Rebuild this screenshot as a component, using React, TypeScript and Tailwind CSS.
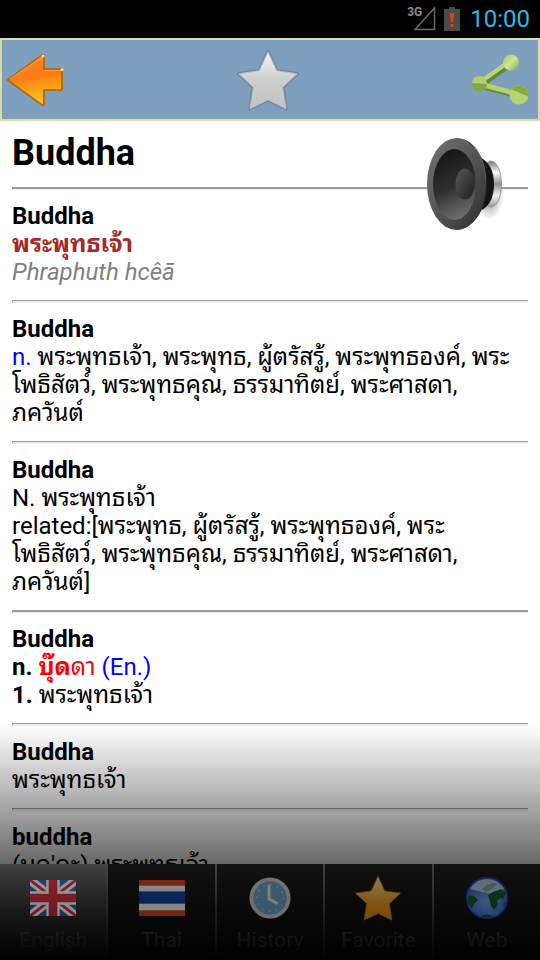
import React, { useState } from 'react';
import { clsx } from 'clsx';

type Entry = {
  word: string;
  thickRule?: boolean;
  body: React.ReactNode;
};

const entries: Entry[] = [
  {
    word: 'Buddha',
    thickRule: true,
    body: (
      <>
        <p className="font-bold text-[#a52a2a]">พระพุทธเจ้า</p>
        <p className="italic text-[#808080]">Phraphuth hcêā</p>
      </>
    ),
  },
  {
    word: 'Buddha',
    body: (
      <p>
        <span className="text-[#0000ff]">n.</span> พระพุทธเจ้า, พระพุทธ, ผู้ตรัสรู้, พระพุทธองค์, พระ
        <br />
        โพธิสัตว์, พระพุทธคุณ, ธรรมาทิตย์, พระศาสดา,
        <br />
        ภควันต์
      </p>
    ),
  },
  {
    word: 'Buddha',
    body: (
      <>
        <p>N. พระพุทธเจ้า</p>
        <p>
          related:[พระพุทธ, ผู้ตรัสรู้, พระพุทธองค์, พระ
          <br />
          โพธิสัตว์, พระพุทธคุณ, ธรรมาทิตย์, พระศาสดา,
          <br />
          ภควันต์]
        </p>
      </>
    ),
  },
  {
    word: 'Buddha',
    thickRule: true,
    body: (
      <>
        <p>
          <b>n.</b>{' '}
          <span className="text-[#ff0000]">
            <b>บุ๊ด</b>ดา
          </span>{' '}
          <span className="text-[#0000ff]">(En.)</span>
        </p>
        <p>
          <b>1.</b> พระพุทธเจ้า
        </p>
      </>
    ),
  },
  { word: 'Buddha', body: <p>พระพุทธเจ้า</p> },
  { word: 'buddha', body: <p>(บุด'ดะ) พระพุทธเจ้า</p> },
];

const STAR = 'M32 3l9 19.500L62 25.500 47 39.500l3.500 22L32 52.500 13.500 61.500l3.500-22L2 25.500l21-3z';

const BackIcon = () => (
  <svg viewBox="0 0 58 54" className="w-[58px] h-[54px]">
    <defs>
      <linearGradient id="back" x1="0" y1="0" x2="0.15" y2="1">
        <stop offset="0" stopColor="#ff8232" />
        <stop offset="0.5" stopColor="#fd7a14" />
        <stop offset="0.58" stopColor="#fc8a14" />
        <stop offset="1" stopColor="#ffc323" />
      </linearGradient>
    </defs>
    <path d="M1.500 27L36 2h2v14h18v21H38v15h-2z" fill="url(#back)" stroke="#a8701c" strokeWidth="2" strokeLinejoin="round" />
    <path d="M4 26L36 4M39 17.500h16" fill="none" stroke="#ff9c50" strokeWidth="1" />
    <circle cx="37" cy="3" r="1.500" fill="#f6dcb4" />
    <circle cx="56" cy="16.500" r="1.500" fill="#f6dcb4" />
  </svg>
);

const StarIcon = () => (
  <svg viewBox="0 0 64 64" className="w-[62px] h-[62px]">
    <defs>
      <linearGradient id="silver" x1="0" y1="0" x2="0" y2="1">
        <stop offset="0" stopColor="#f6f6f6" />
        <stop offset="0.45" stopColor="#d0d0d0" />
        <stop offset="1" stopColor="#c2c2c2" />
      </linearGradient>
    </defs>
    <path d={STAR} fill="#5c6b79" opacity="0.4" stroke="#5c6b79" strokeWidth="4" strokeLinejoin="round" />
    <path d={STAR} fill="url(#silver)" stroke="#bdbdbd" strokeWidth="1" strokeLinejoin="round" />
  </svg>
);

const ShareIcon = () => (
  <svg viewBox="0 0 58 52" className="w-[58px] h-[52px]">
    <defs>
      <linearGradient id="knob" x1="0" y1="0" x2="1" y2="1">
        <stop offset="0" stopColor="#a5c65c" />
        <stop offset="0.5" stopColor="#cfe596" />
        <stop offset="1" stopColor="#7fa540" />
      </linearGradient>
    </defs>
    <path d="M8 31L39 9" stroke="#64873a" strokeWidth="7" />
    <path d="M7 29L38 7" stroke="#b9d67c" strokeWidth="4" />
    <path d="M8 31l38 10" stroke="#688d38" strokeWidth="7" />
    <path d="M8 30l38 10" stroke="#b4d272" strokeWidth="5" />
    <circle cx="39" cy="8.500" r="8" fill="url(#knob)" />
    <circle cx="7.500" cy="30.500" r="7.500" fill="#83a843" />
    <path d="M0 29a7.500 7.500 0 0 1 15 1z" fill="#b0d070" />
    <circle cx="47" cy="41" r="9.500" fill="#b6d673" />
    <path d="M39.500 35.500a9.500 9.500 0 0 1 17 7z" fill="#86aa48" />
  </svg>
);

const SpeakerIcon = () => (
  <svg viewBox="0 0 80 94" className="w-20 h-[94px]">
    <defs>
      <linearGradient id="rim" x1="0" y1="0" x2="1" y2="1">
        <stop offset="0" stopColor="#747474" />
        <stop offset="0.5" stopColor="#555" />
        <stop offset="1" stopColor="#2c2c2c" />
      </linearGradient>
      <linearGradient id="cone" x1="0.4" y1="0" x2="0.7" y2="1">
        <stop offset="0" stopColor="#161616" />
        <stop offset="0.5" stopColor="#2f2f2f" />
        <stop offset="1" stopColor="#757575" />
      </linearGradient>
      <linearGradient id="cap" x1="0" y1="0" x2="1" y2="1">
        <stop offset="0" stopColor="#5a5a5a" />
        <stop offset="1" stopColor="#1c1c1c" />
      </linearGradient>
      <linearGradient id="magnet" x1="0" y1="0" x2="0" y2="1">
        <stop offset="0" stopColor="#777" />
        <stop offset="0.25" stopColor="#fafafa" />
        <stop offset="0.5" stopColor="#8f8f8f" />
        <stop offset="0.75" stopColor="#f2f2f2" />
        <stop offset="1" stopColor="#999" />
      </linearGradient>
      <radialGradient id="shade">
        <stop offset="0" stopColor="#000" stopOpacity="0.5" />
        <stop offset="1" stopColor="#000" stopOpacity="0" />
      </radialGradient>
    </defs>
    <ellipse cx="63" cy="57" rx="15" ry="26" fill="url(#shade)" />
    <ellipse cx="65" cy="47" rx="10.500" ry="23" fill="url(#magnet)" stroke="#9a9a9a" />
    <path d="M54 20q14 8 14 27t-12 26z" fill="#141414" />
    <path d="M31 1.500c16-1 30 20 30 45.500S47 92 31 93z" fill="#262626" />
    <path d="M48 10q12 16 11 38" fill="none" stroke="#777" strokeWidth="2" />
    <ellipse cx="30.500" cy="47" rx="29.500" ry="46" fill="url(#rim)" />
    <ellipse cx="28.500" cy="47.500" rx="21.500" ry="35.500" fill="url(#cone)" />
    <ellipse cx="39" cy="47" rx="9.500" ry="15.500" fill="url(#cap)" />
  </svg>
);

const UkFlag = () => (
  <svg viewBox="0 0 48 38" preserveAspectRatio="none" className="w-[46px] h-9">
    <rect width="48" height="38" fill="#1c4fa4" />
    <path d="M0 0l48 38M48 0L0 38" stroke="#fff" strokeWidth="9" />
    <path d="M0 0l18 14M48 0L30 14M48 38L30 24M0 38l18-14" stroke="#d0142c" strokeWidth="3" />
    <path d="M24 0v38M0 19h48" stroke="#fff" strokeWidth="14" />
    <path d="M24 0v38M0 19h48" stroke="#d0142c" strokeWidth="9" />
  </svg>
);

const ThaiFlag = () => (
  <svg viewBox="0 0 48 38" preserveAspectRatio="none" className="w-[46px] h-9">
    <rect width="48" height="38" fill="#e0401c" />
    <rect y="6" width="48" height="26" fill="#fff" />
    <rect y="12" width="48" height="13" fill="#0a3fa6" />
  </svg>
);

const ClockIcon = () => (
  <svg viewBox="0 0 44 44" className="w-[42px] h-[42px]">
    <circle cx="22" cy="22" r="19.500" fill="#6fa3cc" stroke="#d0d4d8" strokeWidth="4" />
    <circle cx="22" cy="22" r="14" fill="none" stroke="#c4dcf0" strokeWidth="2" strokeDasharray="1 6.330" />
    <path d="M21 8v15l9 5" fill="none" stroke="#eef4fa" strokeWidth="3" />
  </svg>
);

const GoldStar = () => (
  <svg viewBox="0 0 64 64" className="w-12 h-12">
    <defs>
      <linearGradient id="gold" x1="0" y1="0" x2="0" y2="1">
        <stop offset="0" stopColor="#ffe9a0" />
        <stop offset="0.35" stopColor="#f8c04c" />
        <stop offset="0.6" stopColor="#f59f1c" />
        <stop offset="1" stopColor="#f08a10" />
      </linearGradient>
    </defs>
    <path d={STAR} fill="url(#gold)" stroke="#c8780a" strokeWidth="1" strokeLinejoin="round" />
  </svg>
);

const GlobeIcon = () => (
  <svg viewBox="0 0 44 44" className="w-11 h-11">
    <defs>
      <radialGradient id="sea" cx="0.5" cy="0.6" r="0.6">
        <stop offset="0" stopColor="#6fa9ee" />
        <stop offset="1" stopColor="#2c5cb8" />
      </radialGradient>
    </defs>
    <circle cx="22" cy="22" r="20.500" fill="url(#sea)" stroke="#1c2fc0" strokeWidth="1.500" />
    <path d="M5 13Q11 3 22 3t17 10q-8 6-17 4T5 13z" fill="#e6f2f4" opacity="0.7" />
    <path d="M17 13q6-7 15-6l-4 5-7 4z" fill="#5f9a6c" opacity="0.7" />
    <path d="M3 20q4-2 7 1l3 3-4 4-2 5-4-6zM23 19l5-3 8-3 5 4-3 6-3-1-3 3 1 4-4 5-3-4-1-5zM15 40q7-3 14 0-7 3-14 0zM38 27l3-1-2 5z" fill="#0d5a22" />
  </svg>
);

const tabs = [
  { label: 'English', icon: <UkFlag /> },
  { label: 'Thai', icon: <ThaiFlag /> },
  { label: 'History', icon: <ClockIcon /> },
  { label: 'Favorite', icon: <GoldStar /> },
  { label: 'Web', icon: <GlobeIcon /> },
];

const StatusBar = () => (
  <div className="flex h-[38px] shrink-0 items-center justify-end bg-black pr-2.5">
    <span className="self-start pt-1 text-xs font-bold text-[#8a8a8a]">3G</span>
    <svg viewBox="0 0 22 26" className="-ml-2 h-[26px] w-[22px]">
      <path d="M20.500 2v21.500H1z" fill="none" stroke="#6a6a6a" strokeWidth="1.500" />
    </svg>
    <svg viewBox="0 0 16 24" className="ml-2 h-6 w-4">
      <path d="M5 0h6v2h5v22H0V2h5z" fill="#4a4a4a" />
      <path d="M6 6h4l-1 9H7zM6.500 17h3v3h-3z" fill="#ff3a0a" />
    </svg>
    <span className="ml-2.5 text-2xl text-[#33b5e5]">10:00</span>
  </div>
);

export default function App() {
  const [activeTab, setActiveTab] = useState('English');

  return (
    <div className="relative flex h-screen flex-col overflow-hidden bg-white font-['Roboto','Noto_Sans_Thai_Looped','Noto_Looped_Thai','Loma','Noto_Sans',sans-serif] text-black">
      <StatusBar />

      <header className="flex h-[83px] shrink-0 items-center justify-between border-2 border-[#dedca6] bg-[#7f9fbf] px-1">
        <button aria-label="Back"><BackIcon /></button>
        <button aria-label="Add to favorites"><StarIcon /></button>
        <button aria-label="Share" className="mr-1"><ShareIcon /></button>
      </header>

      <main className="relative min-h-0 flex-1 overflow-hidden p-3 text-2xl leading-7">
        <h1 className="text-4xl font-bold">Buddha</h1>
        <button aria-label="Listen" className="absolute top-4 right-[34px]"><SpeakerIcon /></button>
        {entries.map((entry, i) => (
          <section key={i}>
            <hr
              className={clsx(
                'mt-3.5 mb-3 border-l border-t-[#999] border-l-[#999] border-b-[#eee]',
                entry.thickRule ? 'border-t-2 border-b' : 'border-t border-b-2'
              )}
            />
            <h2 className="font-bold">{entry.word}</h2>
            {entry.body}
          </section>
        ))}
      </main>

      <nav className="flex h-24 shrink-0 bg-[#2a2a2a]">
        {tabs.map(({ label, icon }) => (
          <button
            key={label}
            onClick={() => setActiveTab(label)}
            className={clsx(
              'flex flex-1 flex-col items-center border-r-2 border-[#a0a0a0] pt-2.5 last:border-r-0',
              activeTab === label && 'bg-linear-to-b from-[#a0a0a0] to-[#606060]'
            )}
          >
            <span className="relative z-10 flex h-12 items-center opacity-50">{icon}</span>
            <span className="mt-1 text-[21px] leading-7 text-[#e6e6e6]">{label}</span>
          </button>
        ))}
      </nav>

      {/* Fade over the lower part of the screen */}
      <div className="pointer-events-none absolute inset-x-0 bottom-0 h-[235px] bg-linear-to-b from-transparent to-black" />
    </div>
  );
}
